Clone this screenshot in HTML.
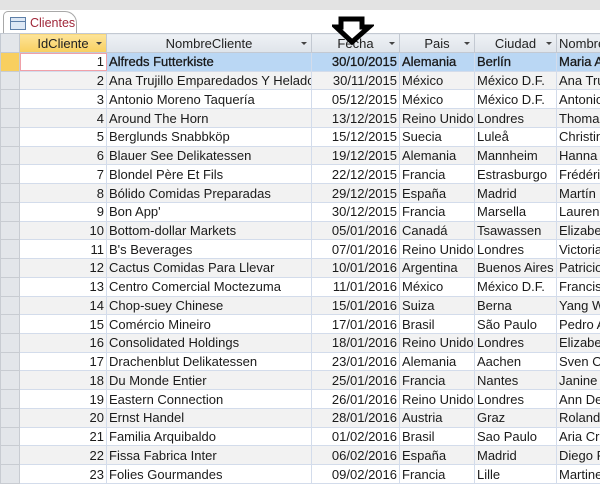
<!DOCTYPE html>
<html><head><meta charset="utf-8"><style>
body{margin:0;width:600px;height:485px;overflow:hidden;background:#fff;font-family:"Liberation Sans",sans-serif;position:relative}
.band{position:absolute;left:0;top:0;width:600px;height:10px;background:#e3e3e3}
.tab{position:absolute;left:3px;top:11px;width:72px;height:23px;border:1px solid #a8a8a8;border-bottom:none;border-radius:5px 12px 0 0;background:#fff}
.tab span{position:absolute;left:26px;top:4px;color:#a0283a;font-size:12.5px}
.ico{position:absolute;left:6px;top:5px;width:14px;height:11px;border:1px solid #5d7fa8;background:linear-gradient(#5d7fa8,#5d7fa8) 0 3px/100% 1px no-repeat,#dde8f5}
.wrap{position:absolute;left:0;top:33px;width:600px;height:452px;overflow:hidden}
table{border-collapse:collapse;table-layout:fixed;width:640px;font-size:13px;color:#1a1a1a}
td,th{height:17.74px;padding:0 2px;border:1px solid #d3dceb;white-space:nowrap;overflow:hidden;line-height:17px}
th{height:18px;font-weight:normal;background:linear-gradient(#eef1f5,#dfe4ea);border-color:#c3c9d2;color:#222;position:relative}
th i{position:absolute;right:4px;top:8px;border:3px solid transparent;border-top:3px solid #444;border-bottom:0}
th.y{background:linear-gradient(#fde49a,#f8cf5f)}
td.s{background:#e3e6ea;border-color:#c8ccd2}
tr.g td{background:#f2f2f2}
tr.g td.s{background:#e3e6ea}
td.n,td.f{text-align:right}
tr.sel td{background:#bad7f4;-webkit-text-stroke:0.3px #1a1a1a}
tr.sel td.s{background:#f8cf5f}
tr.sel td.n{background:#fff;outline:1px solid #f0a0a8;outline-offset:-1px;-webkit-text-stroke:0}
</style></head><body>
<div class="band"></div>
<div class="tab"><div class="ico"></div><span>Clientes</span></div>
<div class="wrap">
<table>
<colgroup><col style="width:19px"><col style="width:87px"><col style="width:205px"><col style="width:88px"><col style="width:75px"><col style="width:82px"><col style="width:84px"></colgroup>
<tr><th style="background:#e3e6ea"></th><th class="y">IdCliente<i></i></th><th>NombreCliente<i></i></th><th>Fecha<i></i></th><th>Pais<i></i></th><th>Ciudad<i></i></th><th style="text-align:left">Nombre</th></tr>
<tr class="sel"><td class="s"></td><td class="n">1</td><td>Alfreds Futterkiste</td><td class="f">30/10/2015</td><td>Alemania</td><td>Berlín</td><td>Maria Anders</td></tr>
<tr class="g"><td class="s"></td><td class="n">2</td><td>Ana Trujillo Emparedados Y Helados</td><td class="f">30/11/2015</td><td>México</td><td>México D.F.</td><td>Ana Trujillo</td></tr>
<tr><td class="s"></td><td class="n">3</td><td>Antonio Moreno Taquería</td><td class="f">05/12/2015</td><td>México</td><td>México D.F.</td><td>Antonio Moreno</td></tr>
<tr class="g"><td class="s"></td><td class="n">4</td><td>Around The Horn</td><td class="f">13/12/2015</td><td>Reino Unido</td><td>Londres</td><td>Thomas Hardy</td></tr>
<tr><td class="s"></td><td class="n">5</td><td>Berglunds Snabbköp</td><td class="f">15/12/2015</td><td>Suecia</td><td>Luleå</td><td>Christina Berglund</td></tr>
<tr class="g"><td class="s"></td><td class="n">6</td><td>Blauer See Delikatessen</td><td class="f">19/12/2015</td><td>Alemania</td><td>Mannheim</td><td>Hanna Moos</td></tr>
<tr><td class="s"></td><td class="n">7</td><td>Blondel Père Et Fils</td><td class="f">22/12/2015</td><td>Francia</td><td>Estrasburgo</td><td>Frédérique Citeaux</td></tr>
<tr class="g"><td class="s"></td><td class="n">8</td><td>Bólido Comidas Preparadas</td><td class="f">29/12/2015</td><td>España</td><td>Madrid</td><td>Martín Sommer</td></tr>
<tr><td class="s"></td><td class="n">9</td><td>Bon App'</td><td class="f">30/12/2015</td><td>Francia</td><td>Marsella</td><td>Laurence Lebihan</td></tr>
<tr class="g"><td class="s"></td><td class="n">10</td><td>Bottom-dollar Markets</td><td class="f">05/01/2016</td><td>Canadá</td><td>Tsawassen</td><td>Elizabeth Lincoln</td></tr>
<tr><td class="s"></td><td class="n">11</td><td>B's Beverages</td><td class="f">07/01/2016</td><td>Reino Unido</td><td>Londres</td><td>Victoria Ashworth</td></tr>
<tr class="g"><td class="s"></td><td class="n">12</td><td>Cactus Comidas Para Llevar</td><td class="f">10/01/2016</td><td>Argentina</td><td>Buenos Aires</td><td>Patricio Simpson</td></tr>
<tr><td class="s"></td><td class="n">13</td><td>Centro Comercial Moctezuma</td><td class="f">11/01/2016</td><td>México</td><td>México D.F.</td><td>Francisco Chang</td></tr>
<tr class="g"><td class="s"></td><td class="n">14</td><td>Chop-suey Chinese</td><td class="f">15/01/2016</td><td>Suiza</td><td>Berna</td><td>Yang Wang</td></tr>
<tr><td class="s"></td><td class="n">15</td><td>Comércio Mineiro</td><td class="f">17/01/2016</td><td>Brasil</td><td>São Paulo</td><td>Pedro Afonso</td></tr>
<tr class="g"><td class="s"></td><td class="n">16</td><td>Consolidated Holdings</td><td class="f">18/01/2016</td><td>Reino Unido</td><td>Londres</td><td>Elizabeth Brown</td></tr>
<tr><td class="s"></td><td class="n">17</td><td>Drachenblut Delikatessen</td><td class="f">23/01/2016</td><td>Alemania</td><td>Aachen</td><td>Sven Ottlieb</td></tr>
<tr class="g"><td class="s"></td><td class="n">18</td><td>Du Monde Entier</td><td class="f">25/01/2016</td><td>Francia</td><td>Nantes</td><td>Janine Labrune</td></tr>
<tr><td class="s"></td><td class="n">19</td><td>Eastern Connection</td><td class="f">26/01/2016</td><td>Reino Unido</td><td>Londres</td><td>Ann Devon</td></tr>
<tr class="g"><td class="s"></td><td class="n">20</td><td>Ernst Handel</td><td class="f">28/01/2016</td><td>Austria</td><td>Graz</td><td>Roland Mendel</td></tr>
<tr><td class="s"></td><td class="n">21</td><td>Familia Arquibaldo</td><td class="f">01/02/2016</td><td>Brasil</td><td>Sao Paulo</td><td>Aria Cruz</td></tr>
<tr class="g"><td class="s"></td><td class="n">22</td><td>Fissa Fabrica Inter</td><td class="f">06/02/2016</td><td>España</td><td>Madrid</td><td>Diego Roel</td></tr>
<tr><td class="s"></td><td class="n">23</td><td>Folies Gourmandes</td><td class="f">09/02/2016</td><td>Francia</td><td>Lille</td><td>Martine Rancé</td></tr>
</table>
</div>
<svg style="position:absolute;left:332px;top:16px" width="42" height="30" viewBox="0 0 42 30"><path d="M9 3 H30 V11 H37 L20 26 L4 11 H9 Z" fill="#fff" stroke="#000" stroke-width="5" stroke-linejoin="miter"/></svg>
</body></html>
